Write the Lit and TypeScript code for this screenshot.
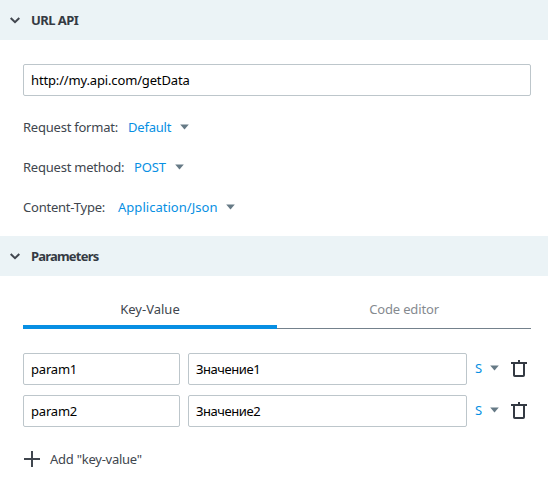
import { LitElement, html, css } from "lit";
import { customElement } from "lit/decorators.js";

const caret = html`<svg class="caret" width="9" height="6" viewBox="0 0 9 6"><path d="M0.2 0.4H8.8L4.5 5.6Z" fill="#667a86" /></svg>`;

const trash = html`<svg class="trash" width="16" height="17" viewBox="0 0 16 17" fill="none" stroke="#343a43">
  <path d="M0 3H16" stroke-width="2" /><path d="M8 0V3" stroke-width="2" />
  <path d="M3 3V15.2Q3 16 3.8 16H12.2Q13 16 13 15.2V3" stroke-width="2" />
</svg>`;

@customElement("section-header")
export class SectionHeader extends LitElement {
  static styles = css`
    :host {
      display: flex;
      align-items: center;
      height: 40px;
      padding-left: 10px;
      gap: 11px;
      box-sizing: border-box;
      background: #ebf3f6;
      color: #343a43;
      font-weight: 700;
    }
    svg { display: block; }
  `;
  render() {
    return html`<svg width="10" height="7" viewBox="0 0 10 7"><path d="M0.7 1L5 5.2L9.3 1" fill="none" stroke="#40464e" stroke-width="2" /></svg><slot></slot>`;
  }
}

@customElement("app-root")
export class AppRoot extends LitElement {
  private options = [
    { label: "Request format:", value: "Default", cls: "format" },
    { label: "Request method:", value: "POST", cls: "method" },
    { label: "Content-Type:", value: "Application/Json", cls: "type" },
  ];
  private rows = [
    { key: "param1", value: "Значение1" },
    { key: "param2", value: "Значение2" },
  ];

  static styles = css`
    :host {
      display: block;
      height: 483px;
      overflow: hidden;
      background: #fff;
      color: #40464e;
      font: 13px/20px "Noto Sans", "Open Sans", sans-serif;
      white-space: nowrap;
    }
    svg { display: block; flex: none; }
    .t-url { letter-spacing: -0.55px; }
    .t-params { letter-spacing: -0.8px; }
    .body { padding: 24px 17px 0 23px; height: 196px; box-sizing: border-box; }
    .field {
      height: 32px;
      box-sizing: border-box;
      border: 1px solid #bdc6cb;
      border-radius: 2px;
      padding: 0 7px;
      line-height: 30px;
      color: #000;
      background: #fff;
    }
    .url { letter-spacing: -0.15px; }
    .option { display: flex; align-items: center; height: 20px; margin-bottom: 20px; }
    .options { padding-top: 21px; }
    .value, .kind { color: #078fe3; }
    .format .label { width: 105px; letter-spacing: -0.23px; }
    .format .value { width: 52px; letter-spacing: -0.2px; }
    .method .label { width: 111px; letter-spacing: -0.23px; }
    .method .value { width: 41px; letter-spacing: -0.1px; }
    .type .label { width: 95px; letter-spacing: -0.22px; }
    .type .value { width: 108px; letter-spacing: 0.03px; }
    .tabs { display: grid; grid-template-columns: 254px 254px; margin: 0 17px 24px 23px; }
    .tab {
      height: 53px;
      box-sizing: border-box;
      padding-top: 23px;
      text-align: center;
      border-bottom: 1px solid #74818c;
      color: #858a8f;
      letter-spacing: -0.15px;
    }
    .tab.active { color: #40464e; border-bottom: 4px solid #078fe3; letter-spacing: 0; }
    .row { display: flex; align-items: center; margin: 0 0 10px 23px; }
    .key { width: 157px; margin-right: 8px; letter-spacing: -0.2px; }
    .val { width: 279px; margin-right: 8px; letter-spacing: -0.45px; }
    .kind { width: 15px; }
    .row .caret { margin-right: 12px; }
    .trash, .kind, .row .caret { margin-bottom: 2px; }
    .add { display: flex; align-items: center; gap: 10px; height: 20px; margin: 22px 0 0 24px; }
    .add span { letter-spacing: -0.25px; }
  `;

  render() {
    return html`
      <section-header><span class="t-url">URL API</span></section-header>
      <div class="body">
        <div class="field"><span class="url">http://my.api.com/getData</span></div>
        <div class="options">
          ${this.options.map(
            (o) => html`<div class="option ${o.cls}"><span class="label">${o.label}</span><span class="value">${o.value}</span>${caret}</div>`
          )}
        </div>
      </div>
      <section-header><span class="t-params">Parameters</span></section-header>
      <div class="tabs">
        <div class="tab active">Key-Value</div>
        <div class="tab">Code editor</div>
      </div>
      ${this.rows.map(
        (r) => html`<div class="row">
          <div class="field key">${r.key}</div>
          <div class="field val">${r.value}</div>
          <span class="kind">S</span>${caret}${trash}
        </div>`
      )}
      <div class="add">
        <svg width="16" height="16" viewBox="0 0 16 16"><path d="M8 0V16M0 8H16" stroke="#40464e" stroke-width="2" /></svg>
        <span>Add "key-value"</span>
      </div>
    `;
  }
}
